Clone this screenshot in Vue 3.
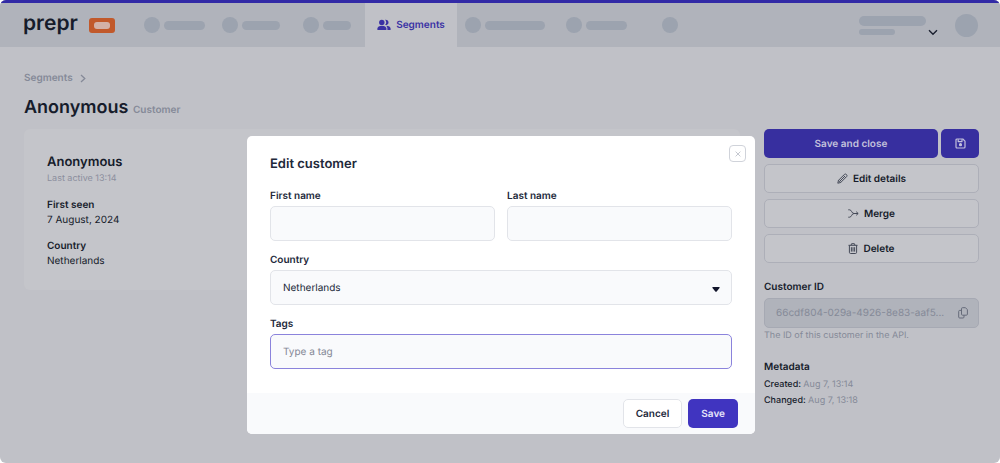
<script setup>
import { ref } from 'vue'

const leftItems = [
  { space: 78, label: 41 },
  { space: 81, label: 38 },
  { space: 62, label: 28 },
]
const rightItems = [
  { space: 101, label: 60 },
  { space: 96, label: 41 },
  { space: 16, label: 0 },
]
const firstName = ref('')
const lastName = ref('')
const country = ref('Netherlands')
const tag = ref('')
</script>

<template>
  <div class="app">
    <header class="topbar">
      <a class="brand" href="#" aria-label="prepr home">
        <span class="wordmark">prepr</span>
        <span class="badge"><span class="badge-hole"></span></span>
      </a>
      <nav class="nav">
        <span v-for="(item, i) in leftItems" :key="'l' + i" class="ghost" :style="{ width: item.space + 'px' }">
          <span class="dot"></span>
          <span class="pill" :style="{ width: item.label + 'px' }"></span>
        </span>
        <a class="tab" href="#">
          <svg width="14" height="12" viewBox="0 0 14 12" fill="currentColor">
            <circle cx="4.8" cy="3.4" r="2.7" />
            <path d="M8.100 .8a2.700 2.700 0 1 1 0 5.200a4 4 0 0 0 0-5.200z" />
            <path d="M.4 11V9.600C.4 7.800 2.300 6.700 4.900 6.700S9.400 7.800 9.400 9.600V11z" />
            <path d="M9.200 6.800c2.600.1 4.400 1.100 4.400 2.800V11h-3.200V9.600c0-1.200-.4-2.100-1.200-2.800z" />
          </svg>
          Segments
        </a>
        <span class="nav-rest">
          <span v-for="(item, i) in rightItems" :key="'r' + i" class="ghost" :style="{ width: item.space + 'px' }">
            <span class="dot"></span>
            <span v-if="item.label" class="pill" :style="{ width: item.label + 'px' }"></span>
          </span>
        </span>
      </nav>
      <div class="account">
        <span class="account-lines"><span class="line-long"></span><span class="line-short"></span></span>
        <svg class="account-chevron" width="10" height="7" viewBox="0 0 10 7" fill="none" stroke="#1b2130" stroke-width="1.4">
          <path d="M1 1.200L5 5.200L9 1.200" />
        </svg>
        <span class="avatar"></span>
      </div>
    </header>

    <main class="page">
      <div class="crumbs">
        <a href="#">Segments</a>
        <svg width="6" height="9" viewBox="0 0 6 9" fill="none" stroke="currentColor" stroke-width="1.3"><path d="M1 1L4.800 4.500L1 8" /></svg>
      </div>
      <h1>Anonymous <small>Customer</small></h1>

      <div class="columns">
        <section class="card">
          <h2>Anonymous</h2>
          <p class="muted">Last active 13:14</p>
          <dl>
            <dt>First seen</dt>
            <dd>7 August, 2024</dd>
            <dt>Country</dt>
            <dd>Netherlands</dd>
          </dl>
        </section>

        <aside class="side">
          <div class="save-row">
            <button class="btn primary dim grow" type="button">Save and close</button>
            <button class="btn primary dim icon-only" type="button" aria-label="Save">
              <svg width="11" height="11" viewBox="0 0 11 11" fill="none" stroke="currentColor" stroke-width="1.200" stroke-linejoin="round">
                <path d="M1 2A1 1 0 0 1 2 1H7.800L10 3.200V9A1 1 0 0 1 9 10H2A1 1 0 0 1 1 9z" />
                <path d="M3.200 1.200V3.600H7V1.200" />
                <circle cx="5.500" cy="6.700" r="1" fill="currentColor" />
              </svg>
            </button>
          </div>
          <button class="btn outline" type="button">
            <svg width="11" height="11" viewBox="0 0 11 11" fill="none" stroke="currentColor" stroke-width="1" stroke-linejoin="round">
              <path d="M.8 10.200L1.500 7.300L7.500 1.300A1.600 1.600 0 0 1 9.700 3.500L3.700 9.500z" />
              <path d="M6.400 2.400L8.600 4.600M1.500 7.300L3.700 9.500M3 8L7.500 3.500" />
            </svg>
            Edit details
          </button>
          <button class="btn outline" type="button">
            <svg width="11" height="9" viewBox="0 0 11 9" fill="none" stroke="currentColor" stroke-width="1">
              <path d="M.3 .8H1.500C3.800 .8 3.600 4.500 6 4.500H10M.3 8.200H1.500C3.800 8.200 3.600 4.500 6 4.500M8.200 2.700L10.200 4.500L8.200 6.300" />
            </svg>
            Merge
          </button>
          <button class="btn outline" type="button">
            <svg width="10" height="11" viewBox="0 0 10 11" fill="none" stroke="currentColor" stroke-width="1" stroke-linejoin="round">
              <path d="M.5 2.300H9.500M3 2.300L3.600 .7H6.400L7 2.300M1.400 2.300V9.300A1.200 1.200 0 0 0 2.600 10.500H7.400A1.200 1.200 0 0 0 8.600 9.300V2.300M3.400 4.200V8.600M5 4.200V8.600M6.600 4.200V8.600" />
            </svg>
            Delete
          </button>

          <h3>Customer ID</h3>
          <div class="id-box">
            <span>66cdf804-029a-4926-8e83-aaf5...</span>
            <button class="copy" type="button" aria-label="Copy customer ID">
              <svg width="10" height="12" viewBox="0 0 10 12" fill="none" stroke="currentColor" stroke-width="1" stroke-linejoin="round">
                <path d="M4.500 .7H7.500L9.400 2.700V7.200A1 1 0 0 1 8.400 8.200H4.500A1 1 0 0 1 3.500 7.200V1.700A1 1 0 0 1 4.500 .7z" />
                <path d="M3.500 3.400H1.700A1 1 0 0 0 .7 4.400V10A1 1 0 0 0 1.700 11H5A1 1 0 0 0 6 10V8.200" />
              </svg>
            </button>
          </div>
          <p class="hint">The ID of this customer in the API.</p>

          <h3 class="meta-title">Metadata</h3>
          <p class="meta">Created: <span>Aug 7, 13:14</span></p>
          <p class="meta">Changed: <span>Aug 7, 13:18</span></p>
        </aside>
      </div>
    </main>

    <div class="overlay">
      <form class="modal" role="dialog" aria-labelledby="dialog-title" @submit.prevent>
        <button class="close" type="button" aria-label="Close">
          <svg width="6" height="6" viewBox="0 0 6 6" stroke="currentColor" stroke-width="1"><path d="M.6 .6L5.400 5.400M5.400 .6L.6 5.400" /></svg>
        </button>
        <div class="modal-body">
          <h2 id="dialog-title">Edit customer</h2>
          <div class="fields">
            <div class="field">
              <label for="first">First name</label>
              <input id="first" v-model="firstName" type="text" />
            </div>
            <div class="field">
              <label for="last">Last name</label>
              <input id="last" v-model="lastName" type="text" />
            </div>
            <div class="field wide">
              <label for="country">Country</label>
              <div class="select">
                <select id="country" v-model="country"><option>Netherlands</option></select>
                <svg width="8" height="5" viewBox="0 0 8 5" fill="#12152b"><path d="M1 0H7Q8.300 0 7.500 1L4.700 4.500Q4 5.200 3.300 4.500L.5 1Q-.3 0 1 0z" /></svg>
              </div>
            </div>
            <div class="field wide">
              <label for="tags">Tags</label>
              <input id="tags" v-model="tag" class="active" type="text" placeholder="Type a tag" />
            </div>
          </div>
        </div>
        <footer class="modal-footer">
          <button class="btn cancel" type="button">Cancel</button>
          <button class="btn primary" type="submit">Save</button>
        </footer>
      </form>
    </div>
  </div>
</template>

<style>
body {
  background: #fff;
}
</style>

<style scoped>
* {
  box-sizing: border-box;
}
.app {
  position: relative;
  min-height: 100vh;
  overflow: hidden;
  border-radius: 6px;
  background: #c0c1c7;
  color: #161c2b;
  font-family: Inter, "Liberation Sans", sans-serif;
  font-size: 10px;
  line-height: 14px;
  text-rendering: geometricPrecision;
}
h1, h2, h3, p, dl, dd {
  margin: 0;
}
a {
  color: inherit;
  text-decoration: none;
}
button, input, select {
  font: inherit;
  color: inherit;
  text-rendering: inherit;
}
.topbar {
  display: flex;
  height: 47px;
  padding: 0 22px 0 23px;
  border-top: 3px solid #322aa6;
  background: #b0b3bb;
}
.brand {
  display: flex;
  align-items: center;
  justify-content: space-between;
  flex: none;
  width: 92px;
  margin-right: 29px;
}
.wordmark {
  font-size: 21px;
  line-height: 24px;
  font-weight: 600;
  padding-bottom: 3px;
}
.badge {
  display: grid;
  place-items: center;
  width: 26px;
  height: 15px;
  border-radius: 3px;
  background: #c1592b;
}
.badge-hole {
  width: 16px;
  height: 7px;
  border-radius: 3px;
  background: #d3b1a7;
}
.nav, .nav-rest {
  display: flex;
}
.nav-rest {
  padding-left: 8px;
}
.ghost {
  display: flex;
  align-items: center;
  gap: 4px;
  flex: none;
}
.dot {
  width: 16px;
  height: 16px;
  border-radius: 50%;
  background: #9ca3af;
}
.pill {
  height: 9px;
  border-radius: 5px;
  background: #9ca3af;
}
.tab {
  display: flex;
  align-items: center;
  justify-content: center;
  gap: 5px;
  width: 92px;
  background: #c0c1c7;
  color: #3a31a4;
  font-weight: 600;
}
.account {
  display: flex;
  align-items: center;
  margin-left: auto;
}
.account-lines {
  display: flex;
  flex-direction: column;
  gap: 3px;
  width: 67px;
}
.line-long, .line-short {
  height: 10px;
  border-radius: 5px;
  background: #9ca3af;
}
.line-short {
  width: 36px;
  height: 6px;
}
.account-chevron {
  margin: 14px 17px 0 2px;
}
.avatar {
  width: 23px;
  height: 23px;
  border-radius: 50%;
  background: #9ca3af;
}
.page {
  padding: 24px 21px 24px 24px;
}
.crumbs {
  display: flex;
  align-items: center;
  gap: 7px;
  color: #858a98;
  font-weight: 600;
}
h1 {
  margin-top: 11px;
  font-size: 18px;
  line-height: 24px;
  font-weight: 600;
}
h1 small {
  color: #858a98;
  font-size: 10px;
  font-weight: 600;
}
.columns {
  display: flex;
  align-items: flex-start;
  gap: 24px;
  margin-top: 7px;
}
.card {
  flex: 1;
  padding: 24px 23px 22px;
  border-radius: 6px;
  background: #c4c5ca;
}
.card h2 {
  font-size: 13px;
  line-height: 18px;
  font-weight: 600;
}
.muted {
  margin-top: 1px;
  color: #8c8f9e;
  font-size: 9px;
}
dt {
  margin-top: 12px;
  line-height: 15px;
  font-weight: 600;
}
dd {
  line-height: 14px;
}
.side {
  display: flex;
  flex-direction: column;
  flex: none;
  width: 215px;
}
.save-row {
  display: flex;
  gap: 3px;
}
.btn {
  display: flex;
  align-items: center;
  justify-content: center;
  gap: 5px;
  height: 29px;
  padding: 0 12px;
  border: 1px solid transparent;
  border-radius: 5px;
  background: none;
  font-weight: 600;
}
.primary {
  background: #4034c0;
  color: #e6e4fa;
}
.dim {
  background: #372f9f;
  color: #c3c1dc;
}
.grow {
  flex: 1;
}
.icon-only {
  width: 38px;
}
.outline {
  margin-top: 6px;
  border-color: #adafb8;
  background: #c4c5ca;
}
.outline svg {
  color: #454a58;
}
h3 {
  margin-top: 17px;
  font-size: 10px;
  line-height: 14px;
  font-weight: 600;
}
.id-box {
  display: flex;
  align-items: center;
  justify-content: space-between;
  height: 30px;
  margin-top: 4px;
  padding: 0 10px 0 11px;
  border: 1px solid #a6a9b3;
  border-radius: 5px;
  background: #b0b3bb;
  color: #858a98;
  white-space: nowrap;
}
.copy {
  display: grid;
  padding: 0;
  border: 0;
  background: none;
  color: #666b7a;
}
.hint {
  margin-top: 1px;
  color: #858a98;
  font-size: 9px;
}
.meta-title {
  margin-bottom: 2px;
}
.meta {
  margin-top: 2px;
  font-size: 9px;
  font-weight: 500;
}
.meta span {
  color: #858a98;
  font-weight: 400;
}
.overlay {
  position: absolute;
  inset: 0;
  display: flex;
  align-items: flex-start;
  justify-content: center;
  padding: 136px 24px 24px 26px;
}
.modal {
  position: relative;
  width: 100%;
  max-width: 508px;
  overflow: hidden;
  border-radius: 5px;
  background: #fff;
  color: #22283a;
}
.modal-body {
  padding: 19px 23px 24px;
}
.modal h2 {
  font-size: 13px;
  line-height: 18px;
  font-weight: 600;
}
.fields {
  display: grid;
  grid-template-columns: 1fr 1fr;
  gap: 12px;
  margin-top: 16px;
}
.field {
  display: flex;
  flex-direction: column;
  gap: 3px;
  min-width: 0;
}
.wide {
  grid-column: 1 / -1;
}
.field label {
  font-weight: 600;
}
.field input, .field select {
  width: 100%;
  height: 35px;
  padding: 0 12px;
  border: 1px solid #e2e4e9;
  border-radius: 5px;
  background: #f9fafc;
  outline: none;
  appearance: none;
}
.field .active {
  border-color: #8b83dc;
}
.field input::placeholder {
  color: #858896;
  opacity: 1;
}
.select {
  display: grid;
  align-items: center;
}
.select select, .select svg {
  grid-area: 1 / 1;
}
.select svg {
  justify-self: end;
  margin: 3px 12px 0 0;
  pointer-events: none;
}
.close {
  position: absolute;
  top: 9px;
  right: 9px;
  display: grid;
  place-items: center;
  width: 17px;
  height: 17px;
  padding: 0;
  border: 1px solid #d0d3da;
  border-radius: 4px;
  background: #fff;
  color: #c5c8d0;
}
.modal-footer {
  display: flex;
  justify-content: flex-end;
  gap: 6px;
  padding: 6px 17px;
  background: #f9fafc;
}
.cancel {
  border-color: #e2e4e9;
  background: #fff;
}
</style>
